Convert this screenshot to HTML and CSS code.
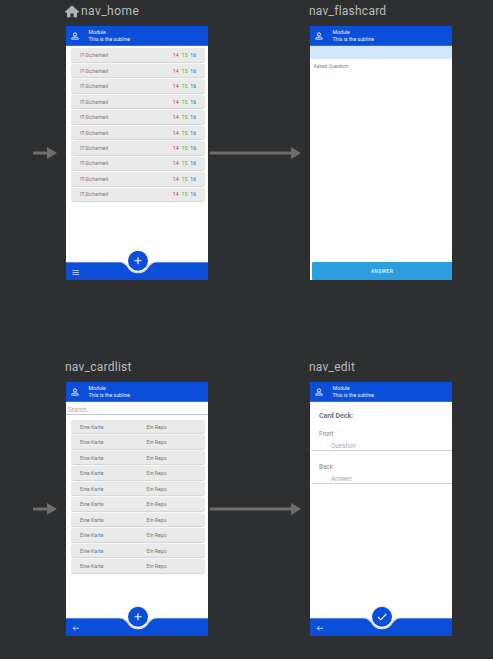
FILE: index.html
```
<!DOCTYPE html>
<html lang="en">
<head>
<meta charset="utf-8">
<title>Navigation graph</title>
<link rel="stylesheet" href="styles.css">
</head>
<body>
<svg class="defs" width="0" height="0" aria-hidden="true">
  <symbol id="person" viewBox="0 0 8 8"><circle cx="4" cy="2.4" r="1.6"/><path d="M.7 7.1V6.3Q1 5 4 5T7.3 6.3V7.1Z"/></symbol>
  <symbol id="arrow" viewBox="0 0 24 12"><path d="M0 4.5H14V0L24 6 14 12V7.5H0Z"/></symbol>
  <symbol id="long-arrow" viewBox="0 0 92 12"><path d="M.7 4.5H82V0L92 6 82 12V7.5H.7Z"/></symbol>
  <symbol id="bar" viewBox="0 0 142 30">
    <path class="bar-fill" d="M0 12.3H53Q58.5 12.3 61.5 16.6A12 12 0 0 0 82.5 16.6Q85.5 12.3 91 12.3H142V30H0Z"/>
    <path class="bar-shade" d="M57.5 12.9Q60 13.8 61.9 16.6A11.6 11.6 0 0 0 82.1 16.6Q84 13.8 86.5 12.9"/>
    <path class="bar-edge" d="M0 12.3H54M90 12.3H142"/>
    <circle class="bar-fill" cx="72" cy="10.8" r="10"/>
  </symbol>
</svg>
<main class="canvas">
  <svg class="link in-top"><use href="#arrow"/></svg>
  <svg class="link long mid-top"><use href="#long-arrow"/></svg>
  <svg class="link in-bottom"><use href="#arrow"/></svg>
  <svg class="link long mid-bottom"><use href="#long-arrow"/></svg>

  <section class="node home">
    <h2 class="name"><svg class="house" viewBox="0 0 14 13"><path d="M7 .3 14 6.8V7.6H12V12.3H8.6V8.4H5.4V12.3H2V7.6H0V6.8Z"/></svg><span>nav_home</span></h2>
    <div class="screen">
      <header class="top"><svg class="person"><use href="#person"/></svg><div><p>Module</p><p>This is the subline</p></div></header>
      <ul class="rows">
        <li><span>IT-Sicherheit</span><b class="r">14</b><b class="g">15</b><b class="n">16</b></li>
        <li><span>IT-Sicherheit</span><b class="r">14</b><b class="g">15</b><b class="n">16</b></li>
        <li><span>IT-Sicherheit</span><b class="r">14</b><b class="g">15</b><b class="n">16</b></li>
        <li><span>IT-Sicherheit</span><b class="r">14</b><b class="g">15</b><b class="n">16</b></li>
        <li><span>IT-Sicherheit</span><b class="r">14</b><b class="g">15</b><b class="n">16</b></li>
        <li><span>IT-Sicherheit</span><b class="r">14</b><b class="g">15</b><b class="n">16</b></li>
        <li><span>IT-Sicherheit</span><b class="r">14</b><b class="g">15</b><b class="n">16</b></li>
        <li><span>IT-Sicherheit</span><b class="r">14</b><b class="g">15</b><b class="n">16</b></li>
        <li><span>IT-Sicherheit</span><b class="r">14</b><b class="g">15</b><b class="n">16</b></li>
        <li><span>IT-Sicherheit</span><b class="r">14</b><b class="g">15</b><b class="n">16</b></li>
      </ul>
      <svg class="bottom" viewBox="0 0 142 30"><use href="#bar"/><path class="glyph" d="M68.5 10.8H75.5M72 7.3V14.3"/><path class="glyph thin" d="M6.5 20.5H13M6.5 22.5H13M6.5 24.5H13"/></svg>
    </div>
  </section>

  <section class="node flashcard">
    <h2 class="name"><span>nav_flashcard</span></h2>
    <div class="screen">
      <header class="top"><svg class="person"><use href="#person"/></svg><div><p>Module</p><p>This is the subline</p></div></header>
      <div class="band"></div>
      <p class="asked">Asked Question</p>
      <div class="answer">ANSWER</div>
    </div>
  </section>

  <section class="node cardlist">
    <h2 class="name"><span>nav_cardlist</span></h2>
    <div class="screen">
      <header class="top"><svg class="person"><use href="#person"/></svg><div><p>Module</p><p>This is the subline</p></div></header>
      <div class="search">Search...</div>
      <ul class="rows cards">
        <li><span>Eine Karte</span><span>Ein Repo</span></li>
        <li><span>Eine Karte</span><span>Ein Repo</span></li>
        <li><span>Eine Karte</span><span>Ein Repo</span></li>
        <li><span>Eine Karte</span><span>Ein Repo</span></li>
        <li><span>Eine Karte</span><span>Ein Repo</span></li>
        <li><span>Eine Karte</span><span>Ein Repo</span></li>
        <li><span>Eine Karte</span><span>Ein Repo</span></li>
        <li><span>Eine Karte</span><span>Ein Repo</span></li>
        <li><span>Eine Karte</span><span>Ein Repo</span></li>
        <li><span>Eine Karte</span><span>Ein Repo</span></li>
      </ul>
      <svg class="bottom" viewBox="0 0 142 30"><use href="#bar"/><path class="glyph" d="M68.5 10.8H75.5M72 7.3V14.3"/><path class="glyph back" d="M13 22.3H7.2M9.3 20.2 7.2 22.3 9.3 24.4"/></svg>
    </div>
  </section>

  <section class="node edit">
    <h2 class="name"><span>nav_edit</span></h2>
    <div class="screen">
      <header class="top"><svg class="person"><use href="#person"/></svg><div><p>Module</p><p>This is the subline</p></div></header>
      <div class="form">
        <h3>Card Deck:</h3>
        <label>Front</label><div class="field">Question</div>
        <label>Back</label><div class="field">Answer</div>
      </div>
      <svg class="bottom" viewBox="0 0 142 30"><use href="#bar"/><path class="glyph" d="M68 11 70.8 13.8 76.3 8"/><path class="glyph back" d="M13 22.3H7.2M9.3 20.2 7.2 22.3 9.3 24.4"/></svg>
    </div>
  </section>
</main>
</body>
</html>
```
FILE: styles.css
```
* { box-sizing: border-box; margin: 0; padding: 0; }
body { background: #2d2f31; font-family: Roboto, "Liberation Sans", sans-serif; }
.defs { position: absolute; }
.canvas { position: relative; width: 493px; height: 659px; overflow: hidden; border-bottom: 1px solid #252729; }
.link { position: absolute; width: 24px; height: 12px; fill: #6e6e6e; }
.link.long { width: 92px; }
.in-top { left: 33px; top: 147px; }
.mid-top { left: 209px; top: 147px; }
.in-bottom { left: 33px; top: 503px; }
.mid-bottom { left: 209px; top: 503px; }
.node { position: absolute; width: 142px; }
.home { left: 66px; top: 0; }
.flashcard { left: 310px; top: 0; }
.cardlist { left: 66px; top: 356px; }
.edit { left: 310px; top: 356px; }
.name { display: flex; align-items: center; height: 26px; padding-bottom: 4px; margin-left: -1px; font-size: 12px; font-weight: 400; letter-spacing: .24px; color: #bbbcbe; }
.home .name { letter-spacing: .45px; }
.house { width: 14px; height: 13px; margin-right: 2px; fill: #afb1b3; }
.screen { display: flex; flex-direction: column; height: 254px; background: #fff; color: #777; font-size: 5.2px; }
.top { display: flex; align-items: center; flex: none; height: 20px; background: #0b4eda; border-bottom: 1px solid #356de0; color: #edf2fd; font-size: 5.2px; line-height: 7px; padding: 1px 0 0 5px; }
.person { width: 8px; height: 8px; margin-right: 9.5px; fill: none; stroke: #e6edfc; stroke-width: 1; }
.rows { display: flex; flex-direction: column; gap: 2.1px; list-style: none; padding: 2.4px 3.2px 0 5px; }
.rows li { display: flex; align-items: center; height: 13.4px; padding: 0 8.7px 0 9px; border-radius: 3.5px; background: #eaeaea; box-shadow: 0 .5px 1px #d2d2d2; }
.rows li span:first-child { flex: 1; }
.rows b { font-weight: 400; margin-left: 2.9px; }
.r { color: #cf3a3a; }
.g { color: #35b635; }
.n { color: #48617f; }
.cards { padding-top: 5px; }
.cards span:last-child { width: 49.7px; }
.bottom { width: 142px; height: 30px; margin-top: auto; flex: none; }
.bar-fill { fill: #0b4eda; }
.bar-shade { fill: none; stroke: #d5d7dc; stroke-width: 1.6; }
.bar-edge { fill: none; stroke: #7198e5; stroke-width: .6; }
.glyph { fill: none; stroke: #fff; stroke-width: 1.1; }
.glyph.thin { stroke: #b9ccf5; stroke-width: .9; }
.glyph.back { stroke: #d5e1fa; stroke-width: .9; }
.band { height: 13px; background: #d2e8f7; }
.asked { padding: 4px 3.5px; line-height: 6px; font-size: 5px; color: #858585; }
.answer { display: flex; align-items: center; justify-content: center; height: 18px; margin: auto 0 0 2px; border-radius: 1px 0 0 1px; background: #2b9edf; color: #e5f3fc; font-size: 5px; font-weight: 500; letter-spacing: .4px; }
.search { height: 13px; padding: 4px 1.5px 0; border-bottom: 1px solid #c7c7c9; color: #aaa; font-size: 6.3px; line-height: 9px; }
.form { display: flex; flex-direction: column; font-size: 6.3px; line-height: 8px; padding-top: 10px; }
.form h3 { font-size: 7px; font-weight: 700; color: #707070; margin: 0 9px 10px; line-height: 8px; }
.form label { margin-left: 9px; color: #858585; }
.field { height: 13px; padding: 4px 0 0 20px; margin: 0 0 12px 1px; border-bottom: 1.5px solid #d0d0d2; color: #aaa; }
```
